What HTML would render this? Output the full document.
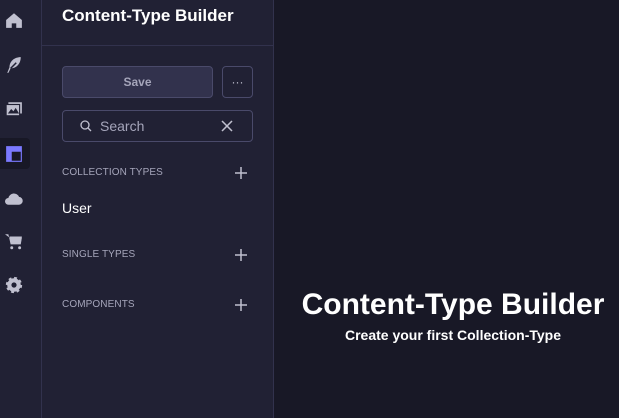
<!DOCTYPE html><html><head><style>
*{margin:0;padding:0;box-sizing:border-box}
body{width:619px;height:418px;background:#181826;font-family:"Liberation Sans",sans-serif;position:relative;overflow:hidden;color:#fff}
.nav{position:absolute;left:0;top:0;width:42px;height:418px;background:#212134;border-right:1px solid #32324d}
.side{position:absolute;left:42px;top:0;width:232px;height:418px;background:#212134;border-right:1px solid #32324d}
.ic{position:absolute;left:5px;width:18px;height:18px}
.abs{position:absolute}
.lbl{position:absolute;left:20px;font-size:10px;color:#a5a5ba;letter-spacing:0.1px}
.plus{position:absolute;left:192px;width:14px;height:14px}
</style></head><body>
<div class="nav">
<div class="abs" style="left:0;top:138px;width:30px;height:31px;background:#181826;border-radius:0 4px 4px 0"></div>
<svg class="ic" width="18" height="18" style="top:11px" viewBox="0 0 16 16"><path d="M1 8L8 2l7 6v7h-5v-4H6v4H1z" fill="#c0c0cf"/></svg>
<svg class="ic" width="18" height="18" style="top:56px" viewBox="0 0 16 16"><path d="M14 1C8 1 4 5 4 10l-2 5h1l2-4c5 0 9-4 9-10z" fill="#c0c0cf"/><path d="M5 11l5-5" stroke="#212134" stroke-width="1.3"/></svg>
<svg class="ic" width="18" height="18" style="top:100px" viewBox="0 0 16 16"><rect x="3" y="2" width="12" height="10" fill="#c0c0cf"/><rect x="1" y="4" width="12" height="10" fill="#c0c0cf" stroke="#212134"/><path d="M2.5 12l3-4 2 2 2-3 3 5z" fill="#212134"/></svg>
<svg class="ic" width="18" height="18" style="top:145px" viewBox="0 0 16 16"><rect x="1" y="1" width="14" height="14" fill="#7b79ff"/><rect x="6" y="6" width="8" height="8" fill="#181826"/></svg>
<svg class="ic" width="18" height="18" style="top:189px" viewBox="0 0 16 16"><path d="M3 14a3 3 0 010-6 5 5 0 019.5-1A3.5 3.5 0 0112 14z" fill="#c0c0cf"/></svg>
<svg class="ic" width="18" height="18" style="top:232px" viewBox="0 0 16 16"><path d="M0 2h3l2 9h9l1-6H4" fill="#c0c0cf"/><path d="M4 4h11l-1 6H5z" fill="#c0c0cf"/><circle cx="6" cy="14" r="1.3" fill="#c0c0cf"/><circle cx="13" cy="14" r="1.3" fill="#c0c0cf"/></svg>
<svg class="ic" width="18" height="18" style="top:276px" viewBox="0 0 16 16"><circle cx="8" cy="8" r="6" fill="#c0c0cf" stroke="#c0c0cf" stroke-width="2.5" stroke-dasharray="2.4 2.3"/><circle cx="8" cy="8" r="2.3" fill="#212134"/></svg>
</div>
<div class="side">
<div class="abs" style="left:20px;top:6px;font-size:17px;font-weight:bold">Content-Type Builder</div>
<div class="abs" style="left:0;top:45px;width:231px;height:1px;background:#32324d"></div>
<div class="abs" style="left:20px;top:66px;width:151px;height:32px;background:#32324d;border:1px solid #4a4a6a;border-radius:4px;color:#a5a5ba;font-size:12px;font-weight:bold;text-align:center;line-height:30px">Save</div>
<div class="abs" style="left:180px;top:66px;width:31px;height:32px;border:1px solid #4a4a6a;border-radius:4px;color:#c0c0cf;text-align:center;line-height:30px;font-size:12px">···</div>
<div class="abs" style="left:20px;top:110px;width:191px;height:32px;border:1px solid #4a4a6a;border-radius:4px"></div>
<svg class="abs" style="left:38px;top:120px" width="12" height="12" viewBox="0 0 12 12"><circle cx="5" cy="5" r="4" fill="none" stroke="#c0c0cf" stroke-width="1.3"/><path d="M8 8l3 3" stroke="#c0c0cf" stroke-width="1.3"/></svg>
<div class="abs" style="left:58px;top:118px;font-size:14px;color:#a5a5ba">Search</div>
<svg class="abs" style="left:179px;top:120px" width="12" height="12"><path d="M1 1l10 10M11 1L1 11" stroke="#c0c0cf" stroke-width="1.5"/></svg>
<div class="lbl" style="top:167px">COLLECTION TYPES</div>
<div class="lbl" style="top:249px">SINGLE TYPES</div>
<div class="lbl" style="top:299px">COMPONENTS</div>
<svg class="plus" style="top:166px"><path d="M7 1v12M1 7h12" stroke="#c0c0cf" stroke-width="1.5"/></svg>
<svg class="plus" style="top:248px"><path d="M7 1v12M1 7h12" stroke="#c0c0cf" stroke-width="1.5"/></svg>
<svg class="plus" style="top:298px"><path d="M7 1v12M1 7h12" stroke="#c0c0cf" stroke-width="1.5"/></svg>
<div class="abs" style="left:20px;top:200px;font-size:14px">User</div>
</div>
<div class="abs" style="left:275px;top:288px;width:356px;text-align:center;font-size:30px;font-weight:bold">Content-Type Builder</div>
<div class="abs" style="left:275px;top:327px;width:356px;text-align:center;font-size:14px;font-weight:bold">Create your first Collection-Type</div>
</body></html>
